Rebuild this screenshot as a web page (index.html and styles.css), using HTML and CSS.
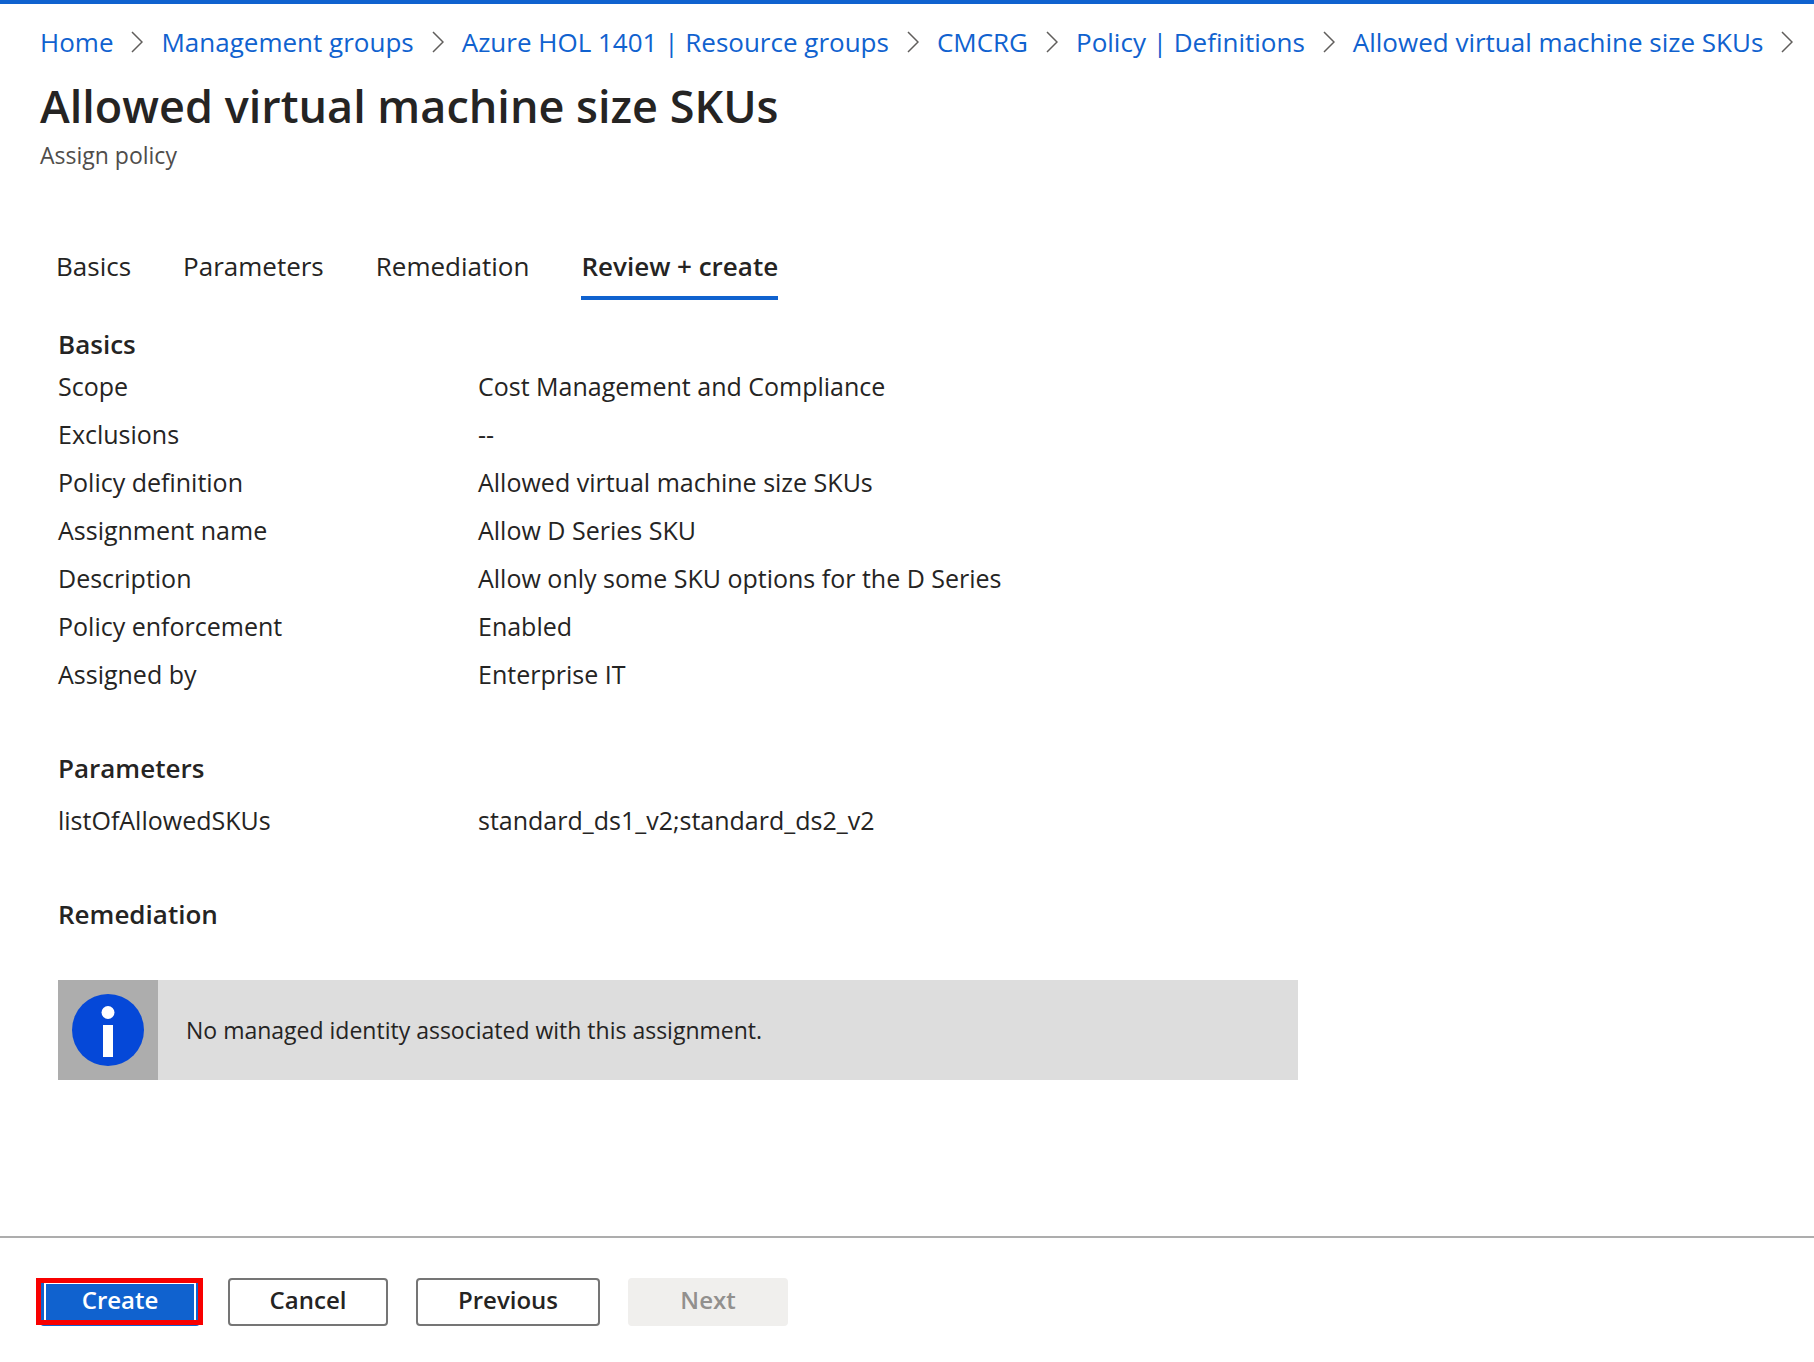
FILE: index.html
```html
<!DOCTYPE html>
<html lang="en">
<head>
<meta charset="utf-8">
<meta name="viewport" content="width=device-width, initial-scale=1">
<title>Allowed virtual machine size SKUs - Assign policy</title>
<link rel="stylesheet" href="styles.css">
</head>
<body>
<div class="page">
  <header class="header">
    <nav aria-label="Breadcrumb">
      <ol class="breadcrumb">
        <li class="crumb"><a href="#">Home</a><svg class="chevron" viewBox="0 0 12 22" aria-hidden="true"><path d="M1 1L11 11L1 21"/></svg></li>
        <li class="crumb"><a href="#">Management groups</a><svg class="chevron" viewBox="0 0 12 22" aria-hidden="true"><path d="M1 1L11 11L1 21"/></svg></li>
        <li class="crumb"><a href="#">Azure HOL 1401 | Resource groups</a><svg class="chevron" viewBox="0 0 12 22" aria-hidden="true"><path d="M1 1L11 11L1 21"/></svg></li>
        <li class="crumb"><a href="#">CMCRG</a><svg class="chevron" viewBox="0 0 12 22" aria-hidden="true"><path d="M1 1L11 11L1 21"/></svg></li>
        <li class="crumb"><a href="#">Policy | Definitions</a><svg class="chevron" viewBox="0 0 12 22" aria-hidden="true"><path d="M1 1L11 11L1 21"/></svg></li>
        <li class="crumb"><a href="#">Allowed virtual machine size SKUs</a><svg class="chevron" viewBox="0 0 12 22" aria-hidden="true"><path d="M1 1L11 11L1 21"/></svg></li>
      </ol>
    </nav>
    <h1 class="title">Allowed virtual machine size SKUs</h1>
    <p class="subtitle">Assign policy</p>
  </header>

  <main class="main">
    <div class="tabs" role="tablist">
      <button class="tab" type="button" role="tab" aria-selected="false">Basics</button>
      <button class="tab" type="button" role="tab" aria-selected="false">Parameters</button>
      <button class="tab" type="button" role="tab" aria-selected="false">Remediation</button>
      <button class="tab tab-active" type="button" role="tab" aria-selected="true">Review + create</button>
    </div>

    <section class="section">
      <h2 class="heading">Basics</h2>
      <dl class="details">
        <dt>Scope</dt><dd>Cost Management and Compliance</dd>
        <dt>Exclusions</dt><dd>--</dd>
        <dt>Policy definition</dt><dd>Allowed virtual machine size SKUs</dd>
        <dt>Assignment name</dt><dd>Allow D Series SKU</dd>
        <dt>Description</dt><dd>Allow only some SKU options for the D Series</dd>
        <dt>Policy enforcement</dt><dd>Enabled</dd>
        <dt>Assigned by</dt><dd>Enterprise IT</dd>
      </dl>
    </section>

    <section class="section section-spaced">
      <h2 class="heading">Parameters</h2>
      <dl class="details details-spaced">
        <dt>listOfAllowedSKUs</dt><dd>standard_ds1_v2;standard_ds2_v2</dd>
      </dl>
    </section>

    <section class="section section-spaced">
      <h2 class="heading">Remediation</h2>
      <div class="notice">
        <div class="notice-icon">
          <svg viewBox="0 0 72 72" aria-hidden="true">
            <circle cx="36" cy="36" r="36" fill="#0548d8"/>
            <circle cx="36" cy="18.500" r="6.500" fill="#fff"/>
            <rect x="31" y="31" width="10" height="32" fill="#fff"/>
          </svg>
        </div>
        <p class="notice-text">No managed identity associated with this assignment.</p>
      </div>
    </section>
  </main>

  <footer class="footer">
    <button class="button button-primary" type="button">Create</button>
    <button class="button" type="button">Cancel</button>
    <button class="button button-wide" type="button">Previous</button>
    <button class="button" type="button" disabled>Next</button>
  </footer>
</div>
</body>
</html>
```
FILE: styles.css
```css
* {
  box-sizing: border-box;
}

body {
  margin: 0;
  background: #fff;
  color: #252423;
  font-family: "Open Sans", "Noto Sans", sans-serif;
  font-size: 25px;
  line-height: 48px;
}

h1,
h2,
p,
ol,
dl,
dd {
  margin: 0;
  padding: 0;
}

.page {
  display: flex;
  flex-direction: column;
  min-height: 100vh;
  border-top: 4px solid #1062cf;
}

.header {
  padding: 14px 0 0 40px;
}

.breadcrumb {
  display: flex;
  gap: 18px;
  list-style: none;
  font-size: 26px;
  white-space: nowrap;
}

.crumb {
  display: flex;
  align-items: center;
  gap: 18px;
}

.crumb a {
  color: #1062cf;
  text-decoration: none;
}

.chevron {
  width: 12px;
  height: 22px;
  fill: none;
  stroke: #605e5c;
  stroke-width: 1.5;
}

.title {
  padding-top: 8px;
  font-size: 45px;
  font-weight: 600;
  line-height: 64px;
}

.subtitle {
  color: #4f4d4b;
  font-size: 23px;
  line-height: 34px;
}

.main {
  flex: 1;
  padding: 60px 0 32px 56px;
}

.tabs {
  display: flex;
  gap: 52px;
}

.tab {
  padding: 10px 0 6px;
  border: 0;
  border-bottom: 4px solid transparent;
  background: none;
  color: inherit;
  font: inherit;
  font-size: 26px;
}

.tab-active {
  border-bottom-color: #1062cf;
  font-weight: 600;
}

.section {
  padding: 26px 0 0 2px;
}

.section-spaced {
  padding-top: 52px;
}

.heading {
  font-size: 26px;
  font-weight: 600;
  line-height: 36px;
}

.details {
  display: grid;
  grid-template-columns: 420px 1fr;
}

.details-spaced {
  padding-top: 10px;
}

.notice {
  display: flex;
  align-items: center;
  max-width: 1240px;
  margin-top: 48px;
  background: #ddd;
}

.notice-icon {
  display: flex;
  padding: 14px;
  background: #adadad;
}

.notice-icon svg {
  width: 72px;
  height: 72px;
}

.notice-text {
  padding-left: 28px;
  font-size: 23px;
}

.footer {
  display: flex;
  gap: 28px;
  padding: 40px 40px 36px;
  border-top: 2px solid #adadad;
}

.button {
  position: relative;
  width: 160px;
  height: 48px;
  padding: 0 0 4px;
  border: 2px solid #757575;
  border-radius: 4px;
  background: #fff;
  color: #252423;
  font: inherit;
  font-size: 24px;
  font-weight: 600;
  line-height: 40px;
}

.button-wide {
  width: 184px;
}

.button:disabled {
  border-color: #f0efed;
  background: #f0efed;
  color: #92908e;
}

.button-primary {
  border-color: #1062cf;
  outline: 2px solid #fff;
  outline-offset: -6px;
  background: #1062cf;
  color: #fff;
}

/* Highlight frame over the primary action */
.button-primary::after {
  content: "";
  position: absolute;
  inset: -2px -5px -1px -6px;
  border: 5px solid #f80000;
}
```
